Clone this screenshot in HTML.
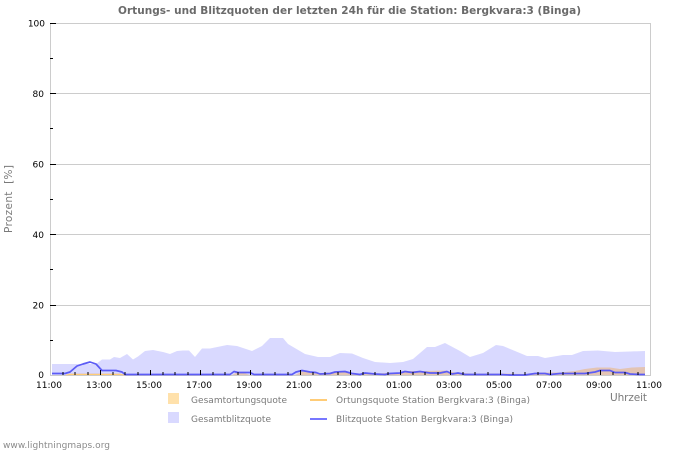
<!DOCTYPE html>
<html><head><meta charset="utf-8"><style>
html,body{margin:0;padding:0;background:#fff;width:700px;height:450px;overflow:hidden}
svg{display:block}
text{font-family:"DejaVu Sans","Liberation Sans",sans-serif;font-size:9px}
.g{fill:#7a7a7a}
</style></head><body>
<svg width="700" height="450" viewBox="0 0 700 450" xmlns="http://www.w3.org/2000/svg">
<rect width="700" height="450" fill="#fff"/>
<text x="118" y="14" textLength="463" style="font-weight:bold;font-size:10.5px" fill="#6a6a6a">Ortungs- und Blitzquoten der letzten 24h für die Station: Bergkvara:3 (Binga)</text>
<g fill="#ccc" shape-rendering="crispEdges">
<rect x="50" y="23" width="601" height="1"/>
<rect x="50" y="93" width="601" height="1"/>
<rect x="50" y="164" width="601" height="1"/>
<rect x="50" y="234" width="601" height="1"/>
<rect x="50" y="305" width="601" height="1"/>
<rect x="50" y="375" width="601" height="1"/>
<rect x="50" y="23" width="1" height="353"/>
<rect x="650" y="23" width="1" height="353"/>
</g>
<path fill="#d9d9ff" d="M52,375V364H96L102,359.5H110L114,357L120,358L127,354L133,359.5L138,356.5L145,351L153,350L163,352L170,354L177,351L183,350.5H189L195,357L202,348.5H210L227,345L237,346L252,351L262,346L270,338H283L288,344L305,354L318,357H330L340,353L352,353.5L363,358L375,362L390,363L403,362L413,359L427,347H435L445,343L460,351L470,357L483,353L496,345L503,346L515,351L527,356H538L545,358L563,355H572L583,351L598,350.5L615,352L630,351.5L645,351V375Z"/>
<path fill="#e3c4b4" d="M66,375L70,373.5H120L125,375H232L236,373H244L250,375H295L302,371.5L315,373.5L330,372.5L345,371.5L355,373.5L375,373.5L400,372.5L410,371L425,371L445,370.5L455,372.5L470,373.5L500,373.5L525,374L540,372.5L560,372.5L575,371L585,369L597,367.5L610,367.5L620,369L632,367.5L645,367V375Z"/>
<path fill="none" stroke="#ffcc77" stroke-width="1" d="M66,375L70,374.5H120L125,375"/>
<path fill="none" stroke="#5c5cf5" stroke-width="1.7" stroke-linejoin="round" d="M52,373.5H65L70,372L77,366L83,364L90,362L96,364L102,370.5L116,370.5L122,372L125,374.5H230L234,371.5L238,372.5H250L254,374.5H292L296,372L302,370.5L310,372L316,372.5L320,374L330,373.5L335,372L345,371.5L352,373.5L360,374.5L365,373L375,374L385,374.5L390,373.5L400,373L405,371.5L412,372.5L420,371.5L430,373L440,373L447,371.5L452,374L458,373L465,374.5H500L510,375H525L535,373.5H545L550,374.5L560,373.5H585L595,372L600,370.5H610L615,372.5H625L630,374L640,374.5H645"/>
<path fill="#000" shape-rendering="crispEdges" d="M50,23h6v1h-6zM50,58h3v1h-3zM50,93h6v1h-6zM50,128h3v1h-3zM50,164h6v1h-6zM50,199h3v1h-3zM50,234h6v1h-6zM50,269h3v1h-3zM50,305h6v1h-6zM50,340h3v1h-3z"/>
<path stroke="#000" stroke-width="1" fill="none" shape-rendering="crispEdges" d="M63,372v3M75,372v3M88,372v3M113,372v3M125,372v3M138,372v3M163,372v3M175,372v3M188,372v3M213,372v3M225,372v3M238,372v3M263,372v3M275,372v3M288,372v3M313,372v3M325,372v3M338,372v3M363,372v3M375,372v3M388,372v3M413,372v3M425,372v3M438,372v3M463,372v3M475,372v3M488,372v3M513,372v3M525,372v3M538,372v3M563,372v3M575,372v3M588,372v3M613,372v3M625,372v3M638,372v3M100.5,370v5M150.5,370v5M200.5,370v5M250.5,370v5M300.5,370v5M350.5,370v5M400.5,370v5M450.5,370v5M500.5,370v5M550.5,370v5M600.5,370v5"/>
<g fill="#000" text-anchor="end">
<text x="45" y="26.5">100</text><text x="44" y="97">80</text><text x="44" y="167.5">60</text><text x="44" y="238">40</text><text x="44" y="308.5">20</text><text x="44" y="378">0</text>
</g>
<g fill="#000" text-anchor="middle">
<text x="49" y="388">11:00</text><text x="99" y="388">13:00</text><text x="149" y="388">15:00</text><text x="199" y="388">17:00</text><text x="249" y="388">19:00</text><text x="299" y="388">21:00</text><text x="349" y="388">23:00</text><text x="399" y="388">01:00</text><text x="449" y="388">03:00</text><text x="499" y="388">05:00</text><text x="549" y="388">07:00</text><text x="599" y="388">09:00</text><text x="649" y="388">11:00</text>
</g>
<text class="g" transform="translate(12,233) rotate(-90)" style="font-size:10.5px" textLength="68" xml:space="preserve">Prozent  [%]</text>
<text class="g" x="610" y="401" style="font-size:10.5px" textLength="37">Uhrzeit</text>
<rect x="168" y="393" width="11" height="11" fill="#ffe1ab"/>
<rect x="168" y="412" width="11" height="11" fill="#d9d9ff"/>
<text class="g" x="191" y="403" textLength="96">Gesamtortungsquote</text>
<text class="g" x="191" y="422" textLength="80">Gesamtblitzquote</text>
<rect x="310" y="399" width="17" height="2" fill="#ffcc77"/>
<rect x="310" y="418" width="17" height="2" fill="#7777ff"/>
<text class="g" x="336" y="403" textLength="194">Ortungsquote Station Bergkvara:3 (Binga)</text>
<text class="g" x="336" y="422" textLength="177">Blitzquote Station Bergkvara:3 (Binga)</text>
<text x="3" y="448" fill="#8a8a8a" textLength="107">www.lightningmaps.org</text>
</svg>
</body></html>
